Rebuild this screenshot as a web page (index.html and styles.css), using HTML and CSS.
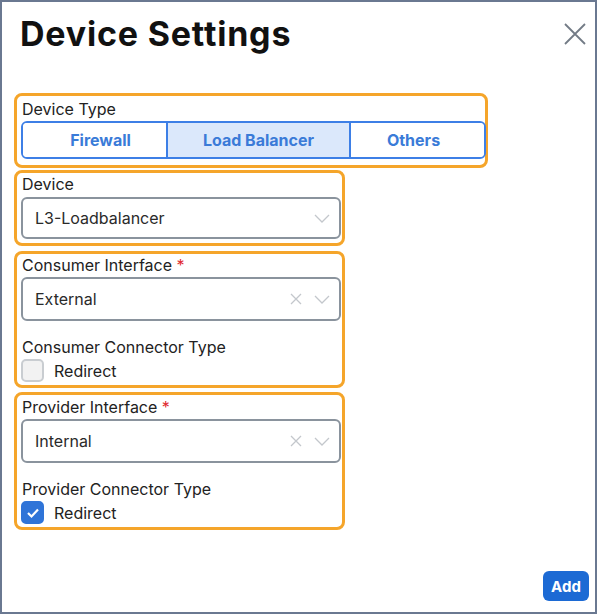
FILE: index.html
```html
<!DOCTYPE html>
<html lang="en">
<head>
  <meta charset="UTF-8">
  <title>Device Settings</title>
  <link rel="stylesheet" href="styles.css">
</head>
<body>
  <div class="dialog">
    <header class="head">
      <h1>Device Settings</h1>
      <button class="close" type="button" aria-label="Close">
        <svg width="24" height="24" viewBox="0 0 24 24"><path d="M2 2 L22 22 M22 2 L2 22" stroke="#737b86" stroke-width="1.8" fill="none"/></svg>
      </button>
    </header>

    <div class="form">
      <!-- device type -->
      <section class="group group-type">
        <div class="label">Device Type</div>
        <div class="segments">
          <button type="button" class="seg seg-a">Firewall</button>
          <button type="button" class="seg seg-b active">Load Balancer</button>
          <button type="button" class="seg seg-c">Others</button>
        </div>
      </section>

      <!-- device -->
      <section class="group group-device">
        <div class="label">Device</div>
        <div class="select short">
          <span class="value">L3-Loadbalancer</span>
          <svg class="chev" width="16" height="9" viewBox="0 0 16 9"><path d="M1 1 L8 8 L15 1" stroke="#c3c7cc" stroke-width="1.3" fill="none"/></svg>
        </div>
      </section>

      <!-- consumer -->
      <section class="group">
        <div class="label">Consumer Interface <span class="req">*</span></div>
        <div class="select">
          <span class="value">External</span>
          <svg class="clear" width="12" height="12" viewBox="0 0 12 12"><path d="M1 1 L11 11 M11 1 L1 11" stroke="#c3c7cc" stroke-width="1.3" fill="none"/></svg>
          <svg class="chev" width="16" height="9" viewBox="0 0 16 9"><path d="M1 1 L8 8 L15 1" stroke="#c3c7cc" stroke-width="1.3" fill="none"/></svg>
        </div>
        <div class="label sub">Consumer Connector Type</div>
        <label class="check">
          <span class="box"></span>
          <span>Redirect</span>
        </label>
      </section>

      <!-- provider -->
      <section class="group group-provider">
        <div class="label">Provider Interface <span class="req">*</span></div>
        <div class="select">
          <span class="value">Internal</span>
          <svg class="clear" width="12" height="12" viewBox="0 0 12 12"><path d="M1 1 L11 11 M11 1 L1 11" stroke="#c3c7cc" stroke-width="1.3" fill="none"/></svg>
          <svg class="chev" width="16" height="9" viewBox="0 0 16 9"><path d="M1 1 L8 8 L15 1" stroke="#c3c7cc" stroke-width="1.3" fill="none"/></svg>
        </div>
        <div class="label sub">Provider Connector Type</div>
        <label class="check">
          <span class="box checked">
            <svg width="14" height="12" viewBox="0 0 14 12"><path d="M2 6 L5.5 9.5 L12 2.5" stroke="#fff" stroke-width="2.2" fill="none"/></svg>
          </span>
          <span>Redirect</span>
        </label>
      </section>
    </div>

    <footer class="foot">
      <button type="button" class="add">Add</button>
    </footer>
  </div>
</body>
</html>
```

FILE: styles.css
```css
body {
  margin: 0;
  background: #fff;
  font-family: Inter, "Liberation Sans", sans-serif;
  color: #222;
}

.dialog {
  box-sizing: border-box;
  width: 597px;
  height: 614px;
  border: 2px solid #6a7891;
  display: flex;
  flex-direction: column;
  padding: 0 6px 11px 12px;
}

.head {
  display: flex;
  justify-content: space-between;
  align-items: flex-start;
  margin-top: 12px;
  height: 40px;
}

.head h1 {
  margin: 0 0 0 6px;
  font-size: 34px;
  line-height: 40px;
  font-weight: 700;
  color: #111;
  letter-spacing: 0.8px;
}

.close {
  border: 0;
  background: none;
  padding: 0;
  margin: 8px 2px 0 0;
  width: 24px;
  height: 24px;
}

.form {
  margin-top: 39px;
  display: flex;
  flex-direction: column;
}

.group {
  box-sizing: border-box;
  width: 331px;
  border: 3px solid #f5a52a;
  border-radius: 8px;
  padding: 1px 1px 3px 4px;
  margin-top: 5px;
}

.group-type {
  width: 474px;
  margin-top: 0;
  padding: 3px 0 6px 4px;
}

.group-device {
  margin-top: 2px;
  padding-bottom: 4px;
}

.group-provider {
  padding-top: 2px;
  margin-top: 4px;
}

.label {
  font-size: 16px;
  line-height: 20px;
  padding-left: 1px;
  color: #222;
}

.label.sub {
  margin-top: 16px;
}

.req {
  color: #e0282e;
}

.segments {
  display: flex;
  margin-top: 2px;
  width: 465px;
  height: 38px;
  box-sizing: border-box;
  border: 2px solid #3d7fe6;
  border-radius: 6px;
  overflow: hidden;
}

.seg {
  box-sizing: border-box;
  border: 0;
  background: #fff;
  font-family: inherit;
  font-size: 16px;
  font-weight: 700;
  color: #3a7bd8;
  padding: 0;
}

.seg-a {
  width: 145px;
  padding-left: 12px;
  border-right: 2px solid #3d7fe6;
}

.seg-b {
  width: 183px;
  border-right: 2px solid #3d7fe6;
}

.seg-c {
  flex: 1;
  padding-right: 8px;
}

.seg.active {
  background: #dbe8fb;
}

.select {
  box-sizing: border-box;
  width: 320px;
  height: 44px;
  margin-top: 2px;
  border: 2px solid #8a939d;
  border-radius: 6px;
  display: flex;
  align-items: center;
  padding: 0 9px 0 12px;
}

.select.short {
  height: 42px;
  margin-top: 3px;
}

.value {
  flex: 1;
  font-size: 16px;
  color: #2a2a2a;
}

.clear {
  margin-right: 12px;
}

.check {
  display: flex;
  align-items: center;
  gap: 10px;
  margin-top: 2px;
  font-size: 16px;
  color: #222;
}

.box {
  box-sizing: border-box;
  width: 23px;
  height: 23px;
  border: 2px solid #c9cdd1;
  border-radius: 5px;
  background: #f2f2f2;
  display: flex;
  align-items: center;
  justify-content: center;
}

.box.checked {
  border-color: #2f74d8;
  background: #2f74d8;
}

.foot {
  margin-top: auto;
  display: flex;
  justify-content: flex-end;
}

.add {
  width: 46px;
  height: 30px;
  border: 0;
  border-radius: 6px;
  background: #1c6ad4;
  color: #fff;
  font-family: inherit;
  font-size: 15px;
  font-weight: 700;
  padding: 0;
}
```
